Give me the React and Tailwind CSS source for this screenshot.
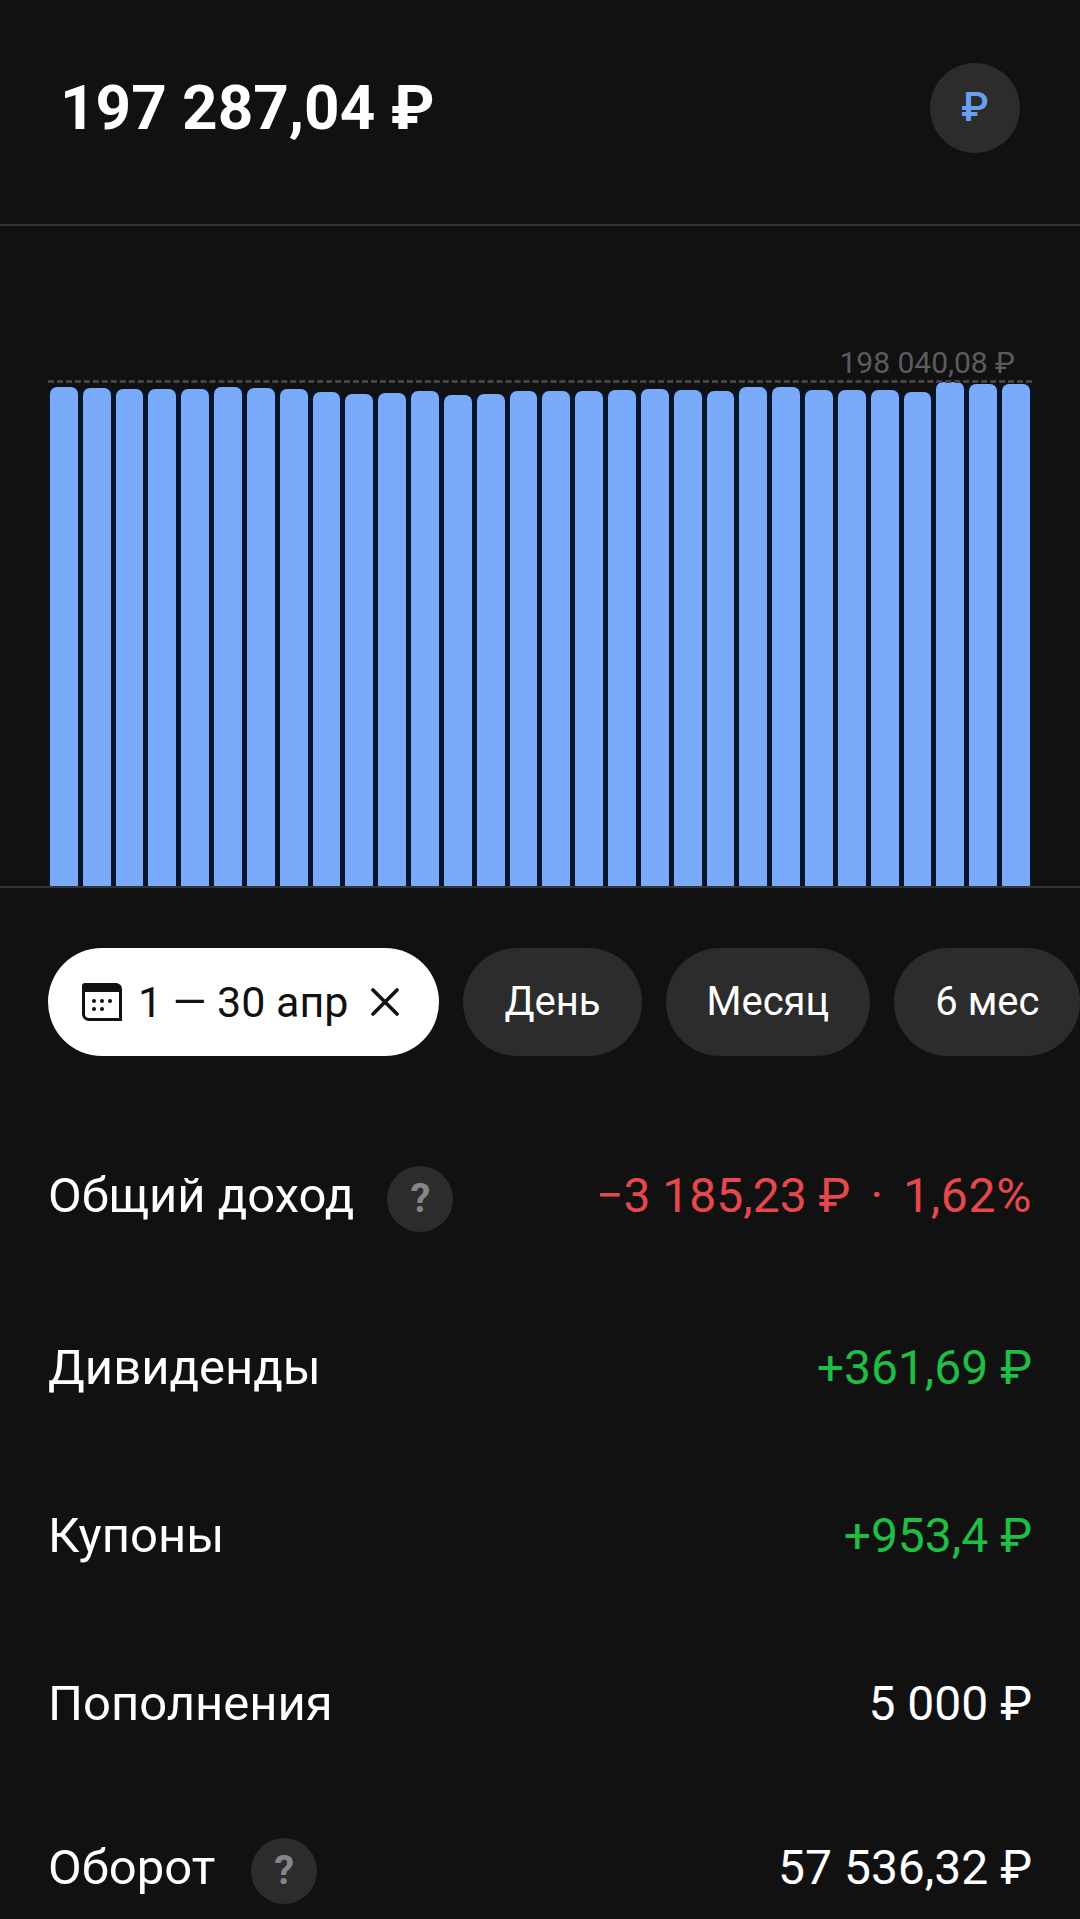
const tops = [387, 388, 389, 389, 389, 387, 388, 389, 392, 394, 393, 391, 395, 394, 391, 391, 391, 390, 389, 390, 391, 387, 387, 390, 390, 390, 392, 382, 384, 384];

const rows = [
  { label: 'Общий доход', value: '−3 185,23 ₽', extra: '1,62%', color: 'text-[#e5484d]', gap: 'mt-0', dot: 'ml-[33px]' },
  { label: 'Дивиденды', value: '+361,69 ₽', color: 'text-[#1fbf45]', gap: 'mt-[106px]' },
  { label: 'Купоны', value: '+953,4 ₽', color: 'text-[#1fbf45]', gap: 'mt-[102px]' },
  { label: 'Пополнения', value: '5 000 ₽', color: 'text-white', gap: 'mt-[102px]' },
  { label: 'Оборот', value: '57 536,32 ₽', color: 'text-white', gap: 'mt-[98px]', dot: 'ml-[36px]' },
];

function CalendarIcon() {
  return (
    <svg width="40" height="38" viewBox="0 0 40 38">
      <path d="M3 0h31a6 6 0 0 1 6 6v32H7a7 7 0 0 1-7-7V3a3 3 0 0 1 3-3z" fill="#111" />
      <path d="M3 9h34v26H7a4 4 0 0 1-4-4z" fill="#fff" />
      <g fill="#111">
        <circle cx="12" cy="18" r="2" />
        <circle cx="20" cy="18" r="2" />
        <circle cx="28" cy="18" r="2" />
        <circle cx="12" cy="26" r="2" />
        <circle cx="20" cy="26" r="2" />
      </g>
    </svg>
  );
}

function Pill({ children }) {
  return (
    <div className="flex h-[108px] shrink-0 items-center rounded-full bg-[#2c2c2c] px-[41px] text-[40px] text-white">
      {children}
    </div>
  );
}

function HelpDot({ className }) {
  return (
    <div className={`flex size-[66px] translate-y-[3px] items-center justify-center rounded-full bg-[#2c2c2c] text-[40px] font-bold text-[#85858a] ${className}`}>
      ?
    </div>
  );
}

export default function App() {
  return (
    <div className="h-[1919px] w-[1080px] overflow-hidden bg-[#111112] font-['Roboto',sans-serif]">
      {/* Header */}
      <div className="flex h-[226px] items-start justify-between border-b-2 border-[#333335] pl-[60px] pr-[60px] pt-[63px]">
        <div className="text-[62px] font-bold leading-[90px] text-white">197 287,04 ₽</div>
        <div className="flex size-[90px] items-center justify-center rounded-full bg-[#2c2c2c] text-[40px] font-medium text-[#6a9ff0]">
          ₽
        </div>
      </div>

      {/* Chart */}
      <div className="relative h-[662px] border-b-2 border-[#333335]">
        <div className="absolute inset-x-[50px] bottom-0 flex h-[660px] items-end gap-[5px]">
          {tops.map((top, i) => (
            <div
              key={i}
              className="flex-1 rounded-t-[7px] bg-[#7aabfb] shadow-[2.5px_0_0_#06152b,-2.5px_0_0_#06152b]"
              style={{ height: 886 - top }}
            />
          ))}
        </div>
        <div className="absolute left-[48px] top-[154px] w-[984px] border-t-[3px] border-dashed border-[#444446]" />
        <div className="absolute right-[65px] top-[119px] text-[30px] leading-[36px] text-[#5c5c5e]">198 040,08 ₽</div>
      </div>

      {/* Period pills */}
      <div className="mt-[60px] flex gap-[24px] pl-[48px]">
        <div className="flex h-[108px] shrink-0 items-center rounded-full bg-white pl-[34px] pr-[40px] text-[43px] text-[#111]">
          <CalendarIcon />
          <span className="ml-[16px]">1 — 30 апр</span>
          <svg className="ml-[23px]" width="28" height="28" viewBox="0 0 28 28" stroke="#111" strokeWidth="3.6" strokeLinecap="round">
            <path d="M2 2l24 24M26 2L2 26" />
          </svg>
        </div>
        <Pill>День</Pill>
        <Pill>Месяц</Pill>
        <Pill>6 мес</Pill>
      </div>

      {/* Summary rows */}
      <div className="mt-[107px] flex flex-col px-[48px]">
        {rows.map((row) => (
          <div key={row.label} className={`flex h-[66px] items-center justify-between ${row.gap}`}>
            <div className="flex items-center text-[49px] text-white">
              {row.label}
              {row.dot && <HelpDot className={row.dot} />}
            </div>
            <div className={`text-[48px] ${row.color}`}>
              {row.value}
              {row.extra && <span className="mx-[20px]">·</span>}
              {row.extra && <span className="tracking-[0.7px]">{row.extra}</span>}
            </div>
          </div>
        ))}
      </div>
    </div>
  );
}
